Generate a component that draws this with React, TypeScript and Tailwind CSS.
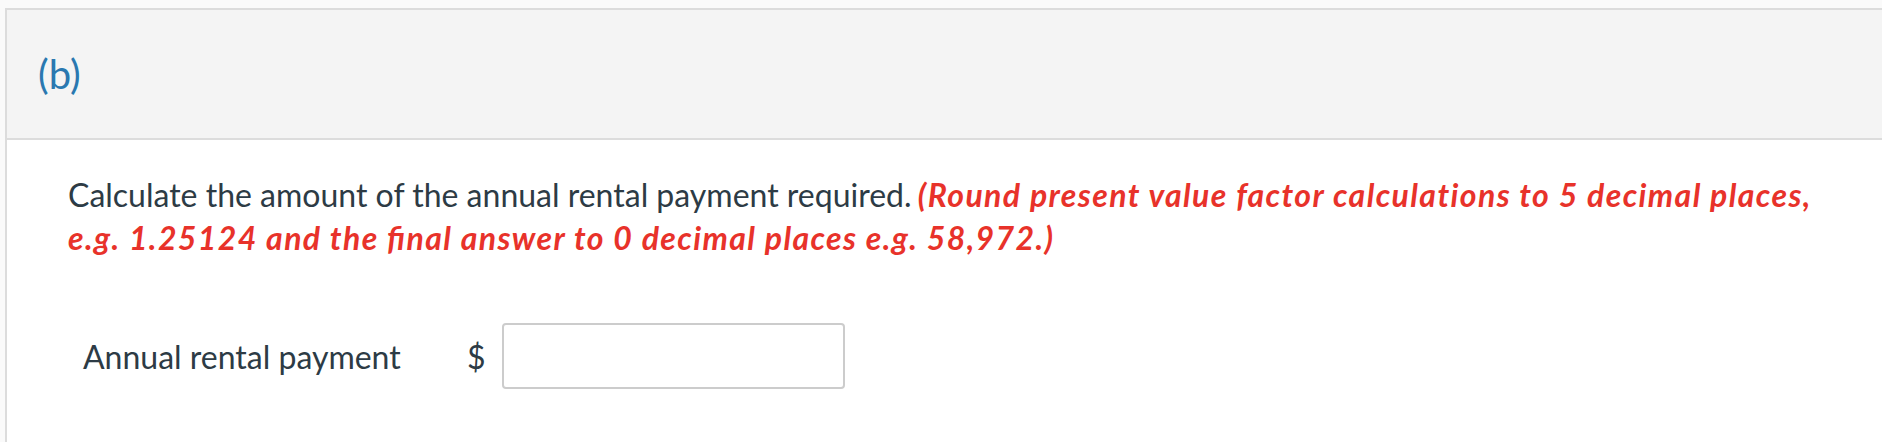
import React from 'react'

export default function App() {
  return (
    <div className="min-h-screen bg-[#fafafa] pt-2 pl-[5px] font-['Lato',sans-serif]">
      <div className="min-h-[434px] bg-white border-l-2 border-t-2 border-[#dcdcdc]">
        {/* Part header */}
        <div className="h-[130px] bg-[#f4f4f4] border-b-2 border-[#dcdcdc] flex items-center pl-[31px]">
          <span className="text-[40px] leading-none text-[#2a78b0]">(b)</span>
        </div>

        {/* Question body */}
        <div className="pl-[61px] pr-[40px] pt-[33px]">
          <p className="text-[32px] leading-[43px] text-[#2d3b45]">
            Calculate the amount of the annual rental payment required.{' '}
            <span className="-ml-[2px] font-bold italic tracking-[1.4px] text-[#e8322a]">
              (Round present value factor calculations to 5 decimal places, e.g. 1.25124 and the ﬁnal answer to 0 decimal places e.g. 58,972.)
            </span>
          </p>

          <div className="mt-[64px] flex items-center pl-[15px] text-[32px] leading-[43px] text-[#2d3b45]">
            <span className="w-[384px]">Annual rental payment</span>
            <span>$</span>
            <input
              type="text"
              className="ml-[16px] w-[343px] h-[66px] bg-white border-2 border-[#cccccc] rounded-[4px] outline-none px-3"
            />
          </div>
        </div>
      </div>
    </div>
  )
}
